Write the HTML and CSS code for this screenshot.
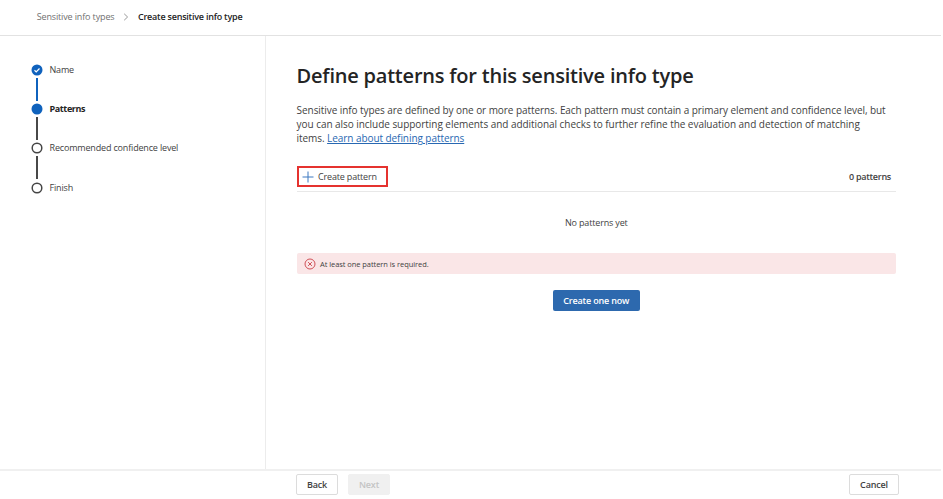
FILE: index.html
```html
<!DOCTYPE html>
<html lang="en">
<head>
<meta charset="utf-8">
<title>Create sensitive info type</title>
<link rel="stylesheet" href="styles.css">
</head>
<body>
<header class="topbar">
  <span class="crumb">Sensitive info types</span>
  <svg class="chevron" viewBox="0 0 6 8"><path d="M1.2 .8 4.6 4 1.2 7.2"/></svg>
  <span class="crumb-current">Create sensitive info type</span>
</header>
<div class="body">
  <nav class="steps">
    <div class="step"><svg class="dot" viewBox="0 0 12 12"><circle class="fill" cx="6" cy="6" r="5.5"/><path class="check" d="M3.5 6.3 5.2 7.9 8.5 4.5"/></svg><span>Name</span></div>
    <i class="line done"></i>
    <div class="step"><svg class="dot" viewBox="0 0 12 12"><circle class="fill" cx="6" cy="6" r="5.5"/></svg><span class="current">Patterns</span></div>
    <i class="line"></i>
    <div class="step"><svg class="dot" viewBox="0 0 12 12"><circle class="ring" cx="6" cy="6" r="4.8"/></svg><span>Recommended confidence level</span></div>
    <i class="line"></i>
    <div class="step"><svg class="dot" viewBox="0 0 12 12"><circle class="ring" cx="6" cy="6" r="4.8"/></svg><span>Finish</span></div>
  </nav>
  <main class="content">
    <h1>Define patterns for this sensitive info type</h1>
    <p class="intro">Sensitive info types are defined by one or more patterns. Each pattern must contain a primary element and confidence level, but<br><span class="looser">you can also include supporting elements and additional checks to further refine the evaluation and detection of matching</span><br>items. <a href="#">Learn about defining patterns</a></p>
    <div class="toolbar">
      <button class="create"><svg class="plus" viewBox="0 0 12 12"><path d="M6 .5v11M.5 6h11"/></svg><span>Create pattern</span></button>
      <span class="count">0 patterns</span>
    </div>
    <div class="empty">No patterns yet</div>
    <div class="error"><svg class="erricon" viewBox="0 0 12 12"><circle cx="6" cy="6" r="5"/><path d="M4.1 4.1 7.9 7.9M7.9 4.1 4.1 7.9"/></svg><span>At least one pattern is required.</span></div>
    <button class="primary">Create one now</button>
  </main>
</div>
<footer class="footer">
  <button class="btn">Back</button>
  <button class="btn disabled" disabled>Next</button>
  <button class="btn cancel">Cancel</button>
</footer>
</body>
</html>
```
FILE: styles.css
```css
* { box-sizing: border-box; }
html { background: #fff; }
body { margin: 0; width: 941px; height: 499px; overflow: hidden; display: flex; flex-direction: column; background: #fff; color: #424242; font: 9px/14px "Open Sans", "Noto Sans", sans-serif; letter-spacing: -.17px; white-space: nowrap; }
button { font: inherit; color: inherit; letter-spacing: inherit; margin: 0; padding: 0; }
svg { fill: none; flex: none; }
.topbar { flex: none; height: 36px; padding: 0 0 2px 36.7px; display: flex; align-items: center; border-bottom: 1px solid #e2e2e2; }
.crumb { color: #707070; letter-spacing: -.14px; }
.chevron { width: 6px; height: 8px; margin: 0 9px 0 8.5px; stroke: #999; }
.crumb-current { color: #242424; font-weight: 600; letter-spacing: -.22px; }
.body { flex: 1; min-height: 0; display: flex; }
.steps { flex: none; width: 266px; border-right: 1px solid #ececec; padding: 27px 0 0 30.5px; }
.step { display: flex; align-items: center; height: 14px; gap: 7px; }
.dot { width: 12px; height: 12px; }
.fill { fill: #0f62bd; }
.check { stroke: #fff; stroke-width: 1.2; }
.ring { stroke: #454545; stroke-width: 1.5; }
.line { display: block; width: 2px; height: 23px; margin: 1px 0 1.2px 5px; background: #484848; }
.line.done { background: #0f62bd; }
.current { color: #242424; font-weight: 700; letter-spacing: -.38px; }
.content { flex: 1; min-width: 0; padding: 26px 45px 0 30.6px; display: flex; flex-direction: column; }
h1 { margin: 0; color: #242424; font-size: 20px; line-height: 28px; font-weight: 600; letter-spacing: -.21px; }
.intro { margin: 13px 0 0; font-size: 10px; line-height: 14px; letter-spacing: -.065px; }
.looser { letter-spacing: -.045px; }
a { color: #2868b2; text-decoration: underline; }
.toolbar { display: flex; align-items: flex-start; justify-content: space-between; height: 26px; margin-top: 21px; border-bottom: 1px solid #e8e8e8; }
.create { width: 91.4px; height: 21px; display: flex; align-items: center; gap: 4.4px; padding-left: 3px; border: 2px solid #e5322f; background: #fff; }
.plus { width: 12px; height: 12px; stroke: #3c78c0; }
.count { margin: 4px 5px 0 0; font-weight: 600; letter-spacing: -.26px; }
.empty { height: 61px; display: flex; align-items: center; justify-content: center; }
.error { height: 21px; display: flex; align-items: center; gap: 4.4px; padding-left: 7px; background: #fae6e7; border-radius: 2px; font-size: 7.5px; letter-spacing: -.06px; }
.erricon { width: 12px; height: 12px; stroke: #cb4148; stroke-width: .9; }
.primary { align-self: center; width: 87px; height: 21px; margin-top: 16px; border: 0; border-radius: 2px; background: #2d69ae; color: #fff; font-weight: 600; }
.footer { flex: none; height: 30px; border-top: 2px solid #f0f0f0; padding: 3px 42px 0 296px; display: flex; gap: 10px; }
.btn { width: 42px; height: 21px; border: 1px solid #dcdcdc; border-radius: 2px; background: #fff; font-weight: 600; }
.disabled { background: #f0f0f0; border-color: #f0f0f0; color: #c4c4c4; }
.cancel { width: 50px; margin-left: auto; }
```
